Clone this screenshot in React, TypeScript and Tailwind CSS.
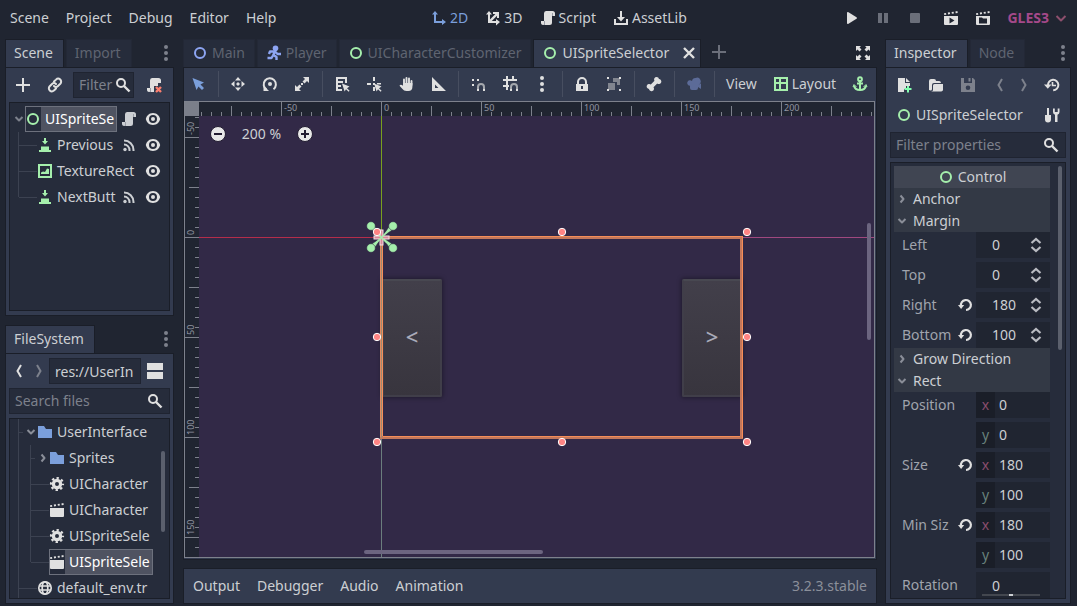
import type { ReactNode } from "react";

const CURSOR = "M8 7.5 15.5 10.6 13 12.2 15.6 14.8 14.6 15.8 12 13.2 10.6 15.4z";

const ICONS: Record<string, ReactNode> = {
  node: <circle cx="8" cy="8" r="5" fill="none" stroke="currentColor" strokeWidth="2" />,
  player: (
    <g fill="none" stroke="currentColor" strokeWidth="2.4" strokeLinejoin="round">
      <circle cx="9.5" cy="3.2" r="2.8" fill="currentColor" stroke="none" />
      <path d="M9 6.5 7 10.5M3 9l1-2.5L9 6.5l2.5 2.5H15M7.5 10l3 2v3M7 10.5 5.5 13H1.5" />
    </g>
  ),
  axes2d: (
    <path d="M4 1 1 4.5h2V13h8v2l4-3-4-3v2H5V4.5h2z" />
  ),
  axes3d: (
    <path d="M4 1 1 4.5h2V13h8v2.5l4-3.5-4-3v2H6.8L12 5.8V8h2V2H8v2h2.4L5 9.6V4.5h2z" />
  ),
  script: (
    <>
      <path d="M6 1a2.5 2.5 0 0 0-2 2.5V11H1v2.3A2 2 0 0 0 3 15h6.5a2.5 2.5 0 0 0 2.5-2.5V6h3V3.5A2.5 2.5 0 0 0 12.5 1z" />
      <path d="M4 11h1v4H3c1 0 1-1 1-2zM12 3h1v3h-1z" fill="#9a9da6" />
    </>
  ),
  scriptRemove: (
    <>
      <path d="M6 1a2.5 2.5 0 0 0-2 2.5V11H1v2.3A2 2 0 0 0 3 15h5V9h4V6h3V3.5A2.5 2.5 0 0 0 12.5 1z" />
      <path d="M4 11h1v4H3c1 0 1-1 1-2z" fill="#9a9da6" />
      <path d="m10 10 5 5m0-5-5 5" stroke="#fc7f6f" strokeWidth="2.4" />
    </>
  ),
  download: (
    <path d="M7 1v6H4l4 4.5L12 7H9V1zM1 9v6h14V9h-2v4H3V9z" />
  ),
  play: <path d="M4 3v10a1 1 0 0 0 1.5.8l8-5a1 1 0 0 0 0-1.6l-8-5A1 1 0 0 0 4 3z" />,
  pause: <path d="M3 3h4v10H3zM9 3h4v10H9z" />,
  stop: <rect x="3" y="3" width="10" height="10" rx="1" />,
  playScene: (
    <path fillRule="evenodd" d="M1 6h14v8a1 1 0 0 1-1 1H2a1 1 0 0 1-1-1zm5.5 1.5v6l5-3zM1 3.2l2-.3.3 1.8-2 .3zM4.8 2.6l2-.3.3 1.8-2 .3zM8.6 2l2-.3.3 1.8-2 .3zM12.4 1.4l2-.3.3 1.8-2 .3z" />
  ),
  playCustom: (
    <path fillRule="evenodd" d="M1 6h14v8a1 1 0 0 1-1 1H2a1 1 0 0 1-1-1zm3 1.5v6h8v-5H8l-1-1zM1 3.2l2-.3.3 1.8-2 .3zM4.8 2.6l2-.3.3 1.8-2 .3zM8.6 2l2-.3.3 1.8-2 .3zM12.4 1.4l2-.3.3 1.8-2 .3z" />
  ),
  scene: (
    <path d="M1 6h14v8a1 1 0 0 1-1 1H2a1 1 0 0 1-1-1zM1 3.2l2-.3.3 1.8-2 .3zM4.8 2.6l2-.3.3 1.8-2 .3zM8.6 2l2-.3.3 1.8-2 .3zM12.4 1.4l2-.3.3 1.8-2 .3z" />
  ),
  chevronDown: <path d="m4.500 6 3.500 3.500L11.500 6" fill="none" stroke="currentColor" strokeWidth="2" strokeLinejoin="round" />,
  chevronRight: <path d="m6.500 4.500 3 3.500-3 3.500" fill="none" stroke="currentColor" strokeWidth="2" strokeLinejoin="round" />,
  dropdown: <path d="m3.500 6 4.500 4.500L12.500 6" fill="none" stroke="currentColor" strokeWidth="2" strokeLinejoin="round" />,
  back: <path d="M10 2 6.500 8l3.500 6" fill="none" stroke="currentColor" strokeWidth="2" />,
  forward: <path d="m6 2 3.500 6L6 14" fill="none" stroke="currentColor" strokeWidth="2" />,
  dots: (
    <g>
      <circle cx="8" cy="2" r="2" />
      <circle cx="8" cy="8" r="2" />
      <circle cx="8" cy="14" r="2" />
    </g>
  ),
  plus: <path d="M7 1h2v6h6v2H9v6H7V9H1V7h6z" />,
  link: (
    <g fill="none" stroke="currentColor" strokeWidth="2" strokeLinecap="round">
      <path d="M7 4.500 9 2.600a2.900 2.900 0 0 1 4.300 4.200L11 9a2.900 2.900 0 0 1-4 0" />
      <path d="M9 11.500 7 13.400a2.900 2.900 0 0 1-4.300-4.200L5 7a2.900 2.900 0 0 1 4 0" />
    </g>
  ),
  search: (
    <g fill="none" stroke="currentColor" strokeWidth="2">
      <circle cx="6" cy="6" r="4" />
      <path d="m9 9 5.500 5.500" strokeWidth="2.400" />
    </g>
  ),
  button: <path d="M7 1v3H5l3 3.500L11 4H9V1zM4 9.500h8V13h2v2H2v-2h2z" />,
  texture: (
    <>
      <path fillRule="evenodd" d="M1 1h14v14H1zm2 2v10h10V3z" />
      <path d="M4 11V9.500L6 8.500l2 .5 2-3.500 2 .5V11z" />
    </>
  ),
  signal: (
    <g fill="none" stroke="currentColor" strokeWidth="2">
      <circle cx="4" cy="12.500" r="1.700" fill="currentColor" stroke="none" />
      <path d="M3 7.500A5.500 5.500 0 0 1 8.500 13v1M3 3.500A9.500 9.500 0 0 1 12.500 13v1" />
    </g>
  ),
  eye: (
    <>
      <path fillRule="evenodd" d="M8 2C4 2 1.500 5 .8 8 1.500 11 4 14 8 14s6.500-3 7.200-6C14.500 5 12 2 8 2zm0 2a4 4 0 0 1 0 8 4 4 0 0 1 0-8z" />
      <circle cx="8" cy="8" r="2" />
    </>
  ),
  split: <path d="M0 0h16v7H0zM0 9h16v7H0z" />,
  folder: <path d="M1 2h6l2 3h6v9H1z" />,
  gear: (
    <g fill="none" stroke="currentColor">
      <circle cx="8" cy="8" r="3.600" strokeWidth="3.200" />
      <circle cx="8" cy="8" r="6" strokeWidth="2.200" strokeDasharray="2.350 2.362" strokeDashoffset="1.170" />
    </g>
  ),
  globe: (
    <g fill="none" stroke="currentColor" strokeWidth="1.700">
      <circle cx="8" cy="8" r="6.200" />
      <ellipse cx="8" cy="8" rx="2.800" ry="6.200" />
      <path d="M2 6h12M2 10h12" strokeWidth="1.400" />
    </g>
  ),
  close: <path d="m3 3 10 10M13 3 3 13" stroke="currentColor" strokeWidth="2.400" />,
  expand: (
    <path d="M1 1h5L4.500 2.500l2 2-2 2-2-2L1 6zM15 1v5l-1.500-1.500-2 2-2-2 2-2L10 1zM1 15v-5l1.500 1.500 2-2 2 2-2 2L6 15zM15 15h-5l1.500-1.500-2-2 2-2 2 2L15 10z" />
  ),
  select: <path d="M1.500 2 13 6.500 9.500 8.500 13 12 11 14 7.500 10.500 5.500 14z" />,
  move: <path d="M8 1 5 4.500h6zM8 15l3-3.500H5zM1 8l3.500-3v6zM15 8l-3.500-3v6zM8 6l2 2-2 2-2-2z" />,
  rotate: (
    <>
      <path d="M4.500 13.500A6.100 6.100 0 1 1 11.500 13.200" fill="none" stroke="currentColor" strokeWidth="2" />
      <path d="M1.500 9.500V15H7z" />
      <circle cx="8" cy="8" r="2" />
    </>
  ),
  scale: (
    <path d="M9 1h6v6l-2-2-2.500 2.500-2-2L11 3zM1 9v6h6l-2-2 2.500-2.500-2-2L3 11zM7 7h2v2H7z" />
  ),
  listSelect: (
    <>
      <path d="M2 1h11v6h-2V3H4v2h5v2H4v2h3v2H4v2h4v2H2z" />
      <path d={CURSOR} />
    </>
  ),
  pivot: (
    <>
      <path d="M7 1h2v4H7zM1 7h4v2H1zM7 11h2v4H7zM11 7h4v1.500h-4zM7 7h2v2H7z" />
      <path d={CURSOR} />
    </>
  ),
  hand: (
    <>
      <path d="M6 9V3.500M8.500 8V2M11 8V2.500M13.500 9V5" fill="none" stroke="currentColor" strokeWidth="1.900" strokeLinecap="round" />
      <path d="M5 7h9.400v4c0 2.500-1.500 4-4 4H8.500c-2 0-3-.8-4-2L1.500 9.800C2 8.500 3.500 8.500 5 9.800z" />
    </>
  ),
  ruler: <path fillRule="evenodd" d="M2 1v14h14zm3 7.500 3.500 3.500H5z" />,
  smartSnap: (
    <>
      <path d="M2 3h2v2H2zM7 3h2v2H7zM2 8h2v2H2z" />
      <path d="M8 15v-4a3 3 0 0 1 6 0v4" fill="none" stroke="#a4a7ad" strokeWidth="2" />
      <path d="M7 13h2v2H7zM13 13h2v2h-2z" />
    </>
  ),
  gridSnap: (
    <>
      <path d="M4 0h2v3h4V0h2v3h3v2H6v4h1v2H6v3H4v-3H1V9h3V5H1V3h3z" />
      <path d="M9 15v-4a3 3 0 0 1 6 0v4" fill="none" stroke="#a4a7ad" strokeWidth="2" />
      <path d="M8 13h2v2H8zM14 13h2v2h-2z" />
    </>
  ),
  lock: (
    <path fillRule="evenodd" d="M8 1a5 5 0 0 0-5 5v2H2v7h12V8h-1V6a5 5 0 0 0-5-5zm0 2a3 3 0 0 1 3 3v2H5V6a3 3 0 0 1 3-3zM7 10h2v3H7z" />
  ),
  group: (
    <>
      <path d="M7 2h7v7h-3V6H7zM2 7h7v7H2z" fill="#81858f" />
      <path d="M1 1h2v2H1zM13 1h2v2h-2zM1 13h2v2H1zM13 13h2v2h-2z" />
    </>
  ),
  bone: (
    <path d="M10.500 1a2.500 2.500 0 0 0-2 3.800L4.800 8.500A2.500 2.500 0 1 0 3 12.900a2.500 2.500 0 1 0 4.500-1.700l3.700-3.700A2.500 2.500 0 1 0 13 3.100 2.500 2.500 0 0 0 10.500 1z" />
  ),
  camera: (
    <path d="M9.500 2A3.500 3.500 0 0 0 6 5a2.800 2.800 0 1 0-2 4.800V12a2 2 0 0 0 2 2h4a2 2 0 0 0 2-2v-1l3 2V7.500l-2.500 1.200A3.500 3.500 0 0 0 9.500 2z" />
  ),
  layout: (
    <path fillRule="evenodd" d="M1 1h14v14H1zm2 2v3h3V3zm5 0v3h5V3zM3 8v5h3V8zm5 0v5h5V8z" />
  ),
  anchor: (
    <g fill="none" stroke="currentColor" strokeWidth="2">
      <circle cx="8" cy="3.200" r="1.900" />
      <path d="M8 5v9M5 7.500h6M2 9.500C2.500 12.500 5 14 8 14s5.500-1.500 6-4.500" />
      <path d="M1 11l1-2.500L4.500 11M15 11l-1-2.500L11.500 11" strokeWidth="1" />
    </g>
  ),
  newFile: (
    <>
      <path d="M2 1v14h6v-3h2V9h4V6H9V1zM10 1v4h4z" />
      <path d="M11 9h2v2h2.500v2H13v2.500h-2V13H8.500v-2H11z" fill="#84ffb1" />
    </>
  ),
  open: (
    <path d="M1 13V4a2 2 0 0 1 2-2h3a2 2 0 0 1 2 2h3a2 2 0 0 1 2 2H6a2 2 0 0 0-2 2v4a1.500 1.500 0 0 1-1.500 1.500zM6.500 7H15v5a2 2 0 0 1-2 2.500H3c1.500 0 2-1 2-2V8.500A1.500 1.500 0 0 1 6.500 7z" />
  ),
  save: (
    <path fillRule="evenodd" d="M1 1h3v5h8V1h1l2 2v12H1zm7 7.500a2.300 2.300 0 1 0 0 4.600 2.300 2.300 0 0 0 0-4.600zM8.500 1h2v3.500h-2z" />
  ),
  history: (
    <>
      <path d="M4 8.500A5.200 5.200 0 1 1 9.200 13.200" fill="none" stroke="currentColor" strokeWidth="2" />
      <path d="M0 7.500h7.500l-3.700 4.300z" />
      <path d="M8.500 5v3.500H12" fill="none" stroke="currentColor" strokeWidth="1.600" />
    </>
  ),
  tools: (
    <path d="M3 1h2v7h2v4.500a3 3 0 0 1-6 0V8h2zM9 1.500V5a3 3 0 0 0 2 2.800V15h2.500V7.800A3 3 0 0 0 15.500 5V1.500h-1.800V5h-2.900V1.500z" />
  ),
  revert: (
    <>
      <path d="M4 9A5 5 0 1 1 9 13" fill="none" stroke="currentColor" strokeWidth="2.200" />
      <path d="M1 8h6.200l-3.100 4z" />
    </>
  ),
  updown: (
    <path d="M3.500 6 8 2l4.500 4M3.500 10 8 14l4.500-4" fill="none" stroke="currentColor" strokeWidth="2.200" />
  ),
};

function Icon({ name, className = "text-[#e0e0e0]" }: { name: string; className?: string }) {
  return (
    <svg viewBox="0 0 16 16" fill="currentColor" aria-hidden="true" className={`size-4 shrink-0 ${className}`}>
      {ICONS[name]}
    </svg>
  );
}

function Tool({ name, label, className = "w-8", color }: { name: string; label: string; className?: string; color?: string }) {
  return (
    <button type="button" aria-label={label} className={`flex h-8 shrink-0 items-center justify-center ${className}`}>
      <Icon name={name} className={color} />
    </button>
  );
}

function Separator() {
  return (
    <span className="flex w-2 shrink-0 justify-center">
      <span className="h-[26px] w-px bg-[#474e60]" />
    </span>
  );
}

const TAB_ACTIVE = "border-x border-t border-[#1a1e28] bg-[#333b4f] text-[#cccfd3]";
const TAB_IDLE = "border-x border-t border-[#232836] bg-[#262c3b] text-[#5f6471]";

function DockTab({ label, active }: { label: string; active?: boolean }) {
  return (
    <button type="button" role="tab" aria-selected={!!active} className={`h-7 pr-2.5 pb-0.5 pl-2 ${active ? TAB_ACTIVE : TAB_IDLE}`}>
      {label}
    </button>
  );
}

function DockTabs({ tabs }: { tabs: string[] }) {
  return (
    <div className="flex h-7 shrink-0 items-center">
      <div role="tablist" className="flex flex-1 gap-0.5">
        {tabs.map((t, i) => (
          <DockTab key={t} label={t} active={i === 0} />
        ))}
      </div>
      <button type="button" aria-label="Dock options" className="flex w-4 justify-center">
        <Icon name="dots" className="text-[#7d818c]" />
      </button>
    </div>
  );
}

const PANEL = "border border-[#1a1e28] bg-[#333b4f]";
const BOX = "border border-[#1a1e28] bg-[#262c3b]";
const GUIDE = "bg-[#3c4251]";

function Guide({ last, reach }: { last?: boolean; reach: string }) {
  return (
    <span className="flex h-full shrink-0 items-center">
      <span className={`w-px ${GUIDE} ${last ? "h-1/2 self-start" : "h-full"}`} />
      <span className={`h-px ${reach} ${GUIDE}`} />
    </span>
  );
}

function SceneChild({ icon, label, signal, last }: { icon: string; label: string; signal?: boolean; last?: boolean }) {
  return (
    <li className="flex h-[26px] items-center pr-2">
      <Guide last={last} reach="w-[18px]" />
      <Icon name={icon} className="mr-1 text-[#a5efac]" />
      <span className="flex-1">{label}</span>
      {signal && <Icon name="signal" className="mr-2" />}
      <button type="button" aria-label={`Toggle ${label}`}>
        <Icon name="eye" />
      </button>
    </li>
  );
}

function SceneDock() {
  return (
    <section className="flex min-h-0 flex-[277] flex-col">
      <DockTabs tabs={["Scene", "Import"]} />
      <div className={`flex min-h-0 flex-1 flex-col px-[3px] pb-1 ${PANEL}`}>
        <div className="flex h-[34px] shrink-0 items-center">
          <Tool name="plus" label="Add node" className="w-7" />
          <Tool name="link" label="Instance scene" className="w-9" />
          <label className="flex h-[26px] w-16 items-center border border-[#1f2431] bg-[#262c3b] pl-[5px]">
            <input aria-label="Filter nodes" placeholder="Filter" className="w-9 bg-transparent outline-none placeholder:text-[#7d818c]" />
            <Icon name="search" />
          </label>
          <Tool name="scriptRemove" label="Detach script" className="ml-1 w-8" />
        </div>
        <ul className={`flex-1 overflow-hidden py-[3px] pl-2 ${BOX}`}>
          <li className="flex h-[26px] items-center pr-2">
            <Icon name="chevronDown" className="-mr-0.5 -ml-[7px] text-[#7d818c]" />
            <span className="mr-1 flex h-[26px] flex-1 items-center border border-[#6d717d] bg-[#4f5361] text-white">
              <span className="flex h-full w-[15px] items-center bg-[#262c3b]">
                <Icon name="node" className="-ml-px text-[#a5efac]" />
              </span>
              <span className="ml-1">UISpriteSe</span>
            </span>
            <Icon name="script" className="mr-2" />
            <button type="button" aria-label="Toggle UISpriteSelector">
              <Icon name="eye" />
            </button>
          </li>
          <SceneChild icon="button" label="Previous" signal />
          <SceneChild icon="texture" label="TextureRect" />
          <SceneChild icon="button" label="NextButt" signal last />
        </ul>
      </div>
    </section>
  );
}

function FileRow({ icon, label, selected, last }: { icon: string; label: string; selected?: boolean; last?: boolean }) {
  return (
    <li className="flex h-[26px] items-center">
      <Guide reach="w-0" />
      <span className="w-[11px]" />
      <Guide reach="w-[18px]" last={last} />
      {selected ? (
        <span className="flex h-[26px] items-center border border-[#6d717d] bg-[#4f5361] pr-0.5 text-white">
          <span className="flex h-full w-[15px] items-center bg-[#262c3b]">
            <Icon name={icon} className="-ml-px text-[#e0e0e0]" />
          </span>
          <span className="ml-1">{label}</span>
        </span>
      ) : (
        <>
          <Icon name={icon} />
          <span className="ml-1">{label}</span>
        </>
      )}
    </li>
  );
}

function FileSystemDock() {
  return (
    <section className="flex min-h-0 flex-[279] flex-col">
      <DockTabs tabs={["FileSystem"]} />
      <div className={`flex min-h-0 flex-1 flex-col gap-1 px-[3px] pt-1 pb-1 ${PANEL}`}>
        <div className="flex h-[26px] shrink-0 items-center">
          <button type="button" aria-label="Back" className="w-5 pl-0.5">
            <Icon name="back" />
          </button>
          <button type="button" aria-label="Forward" className="w-5 pl-0.5">
            <Icon name="forward" className="text-[#7d818c]" />
          </button>
          <input aria-label="Path" defaultValue="res://UserIn" className="h-[26px] w-[92px] border border-[#1f2431] bg-[#262c3b] pl-[5px] outline-none" />
          <button type="button" aria-label="Split mode" className="ml-1.5">
            <Icon name="split" />
          </button>
        </div>
        <label className="flex h-[26px] shrink-0 items-center border border-[#1f2431] bg-[#262c3b] pr-1.5 pl-[5px]">
          <input aria-label="Search files" placeholder="Search files" className="w-0 flex-1 bg-transparent outline-none placeholder:text-[#7d818c]" />
          <Icon name="search" />
        </label>
        <div className={`flex min-h-0 flex-1 overflow-hidden pl-2 ${BOX}`}>
          <ul className="flex-1 whitespace-nowrap">
            <li className="flex h-[26px] items-center">
              <Guide reach="w-1" />
              <Icon name="chevronDown" className="-mr-0.5 text-[#8a8e98]" />
              <Icon name="folder" className="mr-1 text-[#7b9fdb]" />
              UserInterface
            </li>
            <li className="flex h-[26px] items-center">
              <Guide reach="w-0" />
              <span className="w-[11px]" />
              <Guide reach="w-1" />
              <Icon name="chevronRight" className="-mr-0.5 text-[#8a8e98]" />
              <Icon name="folder" className="mr-1 text-[#7b9fdb]" />
              Sprites
            </li>
            <FileRow icon="gear" label="UICharacter" />
            <FileRow icon="scene" label="UICharacter" />
            <FileRow icon="gear" label="UISpriteSele" />
            <FileRow icon="scene" label="UISpriteSele" selected last />
            <li className="flex h-[26px] items-center">
              <Guide reach="w-[18px]" />
              <Icon name="globe" className="mr-1 text-[#e0e0e0]" />
              default_env.tr
            </li>
          </ul>
          <span className="mt-8 mr-1 h-[81px] w-1 shrink-0 rounded-full bg-[#5b606d]" />
        </div>
      </div>
    </section>
  );
}

function SceneTab({ icon, color, label, active }: { icon: string; color: string; label: string; active?: boolean }) {
  return (
    <button
      type="button"
      role="tab"
      aria-selected={!!active}
      className={`flex h-7 items-center gap-1 pb-0.5 pl-2 ${active ? `pr-[3px] ${TAB_ACTIVE}` : `pr-[9px] ${TAB_IDLE}`}`}
    >
      <Icon name={icon} className={color} />
      {label}
      {active && <Icon name="close" className="ml-2 text-[#e0e0e0]" />}
    </button>
  );
}

const RULER = Array.from({ length: 92 }, (_, i) => i);
const RULER_SIZE = 14;
const ORIGIN_X = 182;
const ORIGIN_Y = 121;

function tickLength(offset: number) {
  if (offset % 100 === 0) return RULER_SIZE;
  return offset % 50 === 0 ? 10 : 4;
}

function HorizontalRuler() {
  return (
    <svg className="h-[14px] w-0 flex-1 overflow-hidden bg-[#202531]" aria-hidden="true">
      {RULER.map((i) => {
        const offset = (i - 18) * 10;
        return <rect key={i} x={ORIGIN_X + offset} y={RULER_SIZE - tickLength(offset)} width="1" height={tickLength(offset)} fill="#7d818c" />;
      })}
      {[-50, 0, 50, 100, 150, 200].map((v) => (
        <text key={v} x={ORIGIN_X + v * 2 + 3} y="9" fontSize="9" fill="#9194a0">
          {v}
        </text>
      ))}
    </svg>
  );
}

function VerticalRuler() {
  return (
    <svg className="h-full w-[14px] shrink-0 overflow-hidden bg-[#202531]" aria-hidden="true">
      {RULER.map((i) => {
        const offset = (i - 12) * 10;
        return <rect key={i} x={RULER_SIZE - tickLength(offset)} y={ORIGIN_Y + offset} width={tickLength(offset)} height="1" fill="#7d818c" />;
      })}
      {[-50, 0, 50, 100, 150].map((v) => (
        <text key={v} transform={`translate(9 ${ORIGIN_Y + v * 2 - 2}) rotate(-90)`} fontSize="9" fill="#9194a0">
          {v}
        </text>
      ))}
    </svg>
  );
}

const HANDLES = [
  [178, 116], [363, 116], [548, 116],
  [178, 221], [548, 221],
  [178, 326], [363, 326], [548, 326],
];

const PREVIEW_BUTTON =
  "absolute top-[163px] h-[118px] w-[60px] rounded-[2px] border-2 border-[#403e49] border-t-[#484851] bg-linear-to-b from-[#423f4a] to-[#38353e] pb-1 text-[22px] font-medium text-[#a9abb9] shadow-[0_0_4px_1px_rgba(0,0,0,0.35)]";

function ZoomButton({ label, path }: { label: string; path: string }) {
  return (
    <button type="button" aria-label={label}>
      <svg viewBox="0 0 16 16" className="size-4" aria-hidden="true">
        <circle cx="8" cy="8" r="7.500" fill="#e8e8e8" stroke="#221c31" />
        <path d={path} stroke="#221c31" strokeWidth="2" />
      </svg>
    </button>
  );
}

function Canvas() {
  return (
    <div className="relative min-w-0 flex-1 overflow-hidden bg-[#322947]">
      <button type="button" className={`left-[183px] ${PREVIEW_BUTTON}`}>&lt;</button>
      <button type="button" className={`left-[483px] ${PREVIEW_BUTTON}`}>&gt;</button>
      <svg className="absolute inset-0 size-full" aria-hidden="true">
        <rect x="182" y="0" width="1" height="121" fill="#78a01e" />
        <rect x="182" y="323" width="1" height="100%" fill="#6b7d7d" />
        <rect x="0" y="121" width="182" height="1" fill="#b52d4b" />
        <rect x="544" y="121" width="100%" height="1" fill="#a0487f" />
        <g>
          <rect x="182.500" y="121.500" width="360" height="200" fill="none" stroke="#c3775b" strokeWidth="3" />
          <path d="M181 120.500h363M184 320.500h357M183.500 123v197M543.500 121v201" stroke="#f58d58" />
          <path d="M181.500 122v199" stroke="#e08a60" />
          <path d="M182.500 123v199" stroke="#a08a70" />
        </g>
        <g fill="#a5efac" stroke="#2a2540" strokeWidth=".5">
          {[[-1, -1], [1, -1], [-1, 1], [1, 1]].map(([sx, sy]) => (
            <g key={`${sx}${sy}`} transform={`translate(183 121) scale(${sx} ${sy})`}>
              <path d="M0 0 7.500 11 11 7.500z" />
              <circle cx="11" cy="11" r="4.300" />
            </g>
          ))}
        </g>
        <path d="M182.500 113.500v16M174.500 121.500h16" stroke="#f4dfe6" strokeWidth="4" />
        <path d="M182.500 114.500v14M175.500 121.500h14" stroke="#d98a98" strokeWidth="2" />
        <path d="m177 116 11 11m0-11-11 11" stroke="#a5efac" strokeWidth="1.500" />
        {HANDLES.map(([x, y]) => (
          <circle key={`${x}-${y}`} cx={x} cy={y} r="3.700" fill="#ff8484" stroke="#fff" />
        ))}
      </svg>
      <div className="absolute top-[10px] left-[11px] flex h-4 items-center">
        <ZoomButton label="Zoom out" path="M4 8h8" />
        <span className="w-[71px] text-center">200 %</span>
        <ZoomButton label="Zoom in" path="M4 8h8M8 4v8" />
      </div>
      <span className="absolute top-[107px] right-[3px] h-[117px] w-1 rounded-full bg-[#6c6580]" />
      <span className="absolute bottom-[3px] left-[165px] h-1 w-[179px] rounded-full bg-[#6c6580]" />
    </div>
  );
}

function CenterArea() {
  return (
    <main className="flex min-w-0 flex-1 flex-col">
      <div className="flex h-7 shrink-0 items-center">
        <div role="tablist" className="flex flex-1 items-center gap-0.5">
          <SceneTab icon="node" color="text-[#8da5f3]" label="Main" />
          <SceneTab icon="player" color="text-[#8da5f3]" label="Player" />
          <SceneTab icon="node" color="text-[#a5efac]" label="UICharacterCustomizer" />
          <SceneTab icon="node" color="text-[#a5efac]" label="UISpriteSelector" active />
          <button type="button" aria-label="New scene" className="ml-2 pb-0.5">
            <Icon name="plus" className="text-[#6b6f7a]" />
          </button>
        </div>
        <button type="button" aria-label="Distraction free mode" className="mr-1.5">
          <Icon name="expand" />
        </button>
      </div>
      <div className={`flex min-h-0 flex-1 flex-col pr-px pb-px ${PANEL}`}>
        <div className="flex h-[33px] shrink-0 items-center pb-px">
          <Tool name="select" label="Select mode" className="w-[30px]" color="text-[#7b9fdb]" />
          <Separator />
          <Tool name="move" label="Move mode" />
          <Tool name="rotate" label="Rotate mode" />
          <Tool name="scale" label="Scale mode" />
          <Separator />
          <Tool name="listSelect" label="List select" />
          <Tool name="pivot" label="Change pivot" />
          <Tool name="hand" label="Pan mode" />
          <Tool name="ruler" label="Ruler mode" />
          <Separator />
          <Tool name="smartSnap" label="Smart snap" />
          <Tool name="gridSnap" label="Grid snap" />
          <Tool name="dots" label="Snapping options" />
          <Separator />
          <Tool name="lock" label="Lock" />
          <Tool name="group" label="Group" />
          <Separator />
          <Tool name="bone" label="Skeleton options" />
          <Separator />
          <Tool name="camera" label="Override camera" color="text-[#5c6b98]" />
          <Separator />
          <button type="button" className="px-2">View</button>
          <button type="button" className="flex items-center gap-[3px] px-2">
            <Icon name="layout" className="text-[#a5efac]" />
            Layout
          </button>
          <Tool name="anchor" label="Anchor mode" color="text-[#a5efac]" />
        </div>
        <div className="flex min-h-0 flex-1 flex-col border border-[#7d818c]">
          <div className="flex h-[14px] shrink-0">
            <span className="w-[14px] bg-[#7b7f8a]" />
            <HorizontalRuler />
          </div>
          <div className="flex min-h-0 flex-1">
            <VerticalRuler />
            <Canvas />
          </div>
        </div>
      </div>
      <footer className={`mt-2 flex h-9 shrink-0 items-center gap-[17px] px-[9px] ${PANEL}`}>
        <button type="button">Output</button>
        <button type="button">Debugger</button>
        <button type="button">Audio</button>
        <button type="button">Animation</button>
        <span className="flex-1 text-right text-[#8b8f9a]">3.2.3.stable</span>
      </footer>
    </main>
  );
}

function SectionHeader({ label, open }: { label: string; open?: boolean }) {
  return (
    <button type="button" aria-expanded={!!open} className="flex h-[22px] w-full shrink-0 items-center bg-[#333945] text-left">
      <Icon name={open ? "chevronDown" : "chevronRight"} className="mr-[3px] text-[#8a8e98]" />
      {label}
    </button>
  );
}

function PropertyLabel({ id, label, revert }: { id: string; label: string; revert?: boolean }) {
  return (
    <>
      <label htmlFor={id} className="flex-1 pl-2 text-[#a0a4ad]">{label}</label>
      {revert && (
        <button type="button" aria-label={`Revert ${label}`} className="mr-[3px]">
          <Icon name="revert" />
        </button>
      )}
    </>
  );
}

function SpinRow({ label, value, revert }: { label: string; value: string; revert?: boolean }) {
  const id = `margin-${label}`;
  return (
    <div className="flex h-[26px] shrink-0 items-center">
      <PropertyLabel id={id} label={label} revert={revert} />
      <div className="flex h-full w-[74px] items-center bg-[#202531] pr-1.5">
        <input id={id} defaultValue={value} className="w-0 flex-1 bg-transparent pl-4 outline-none" />
        <button type="button" aria-label={`Step ${label}`}>
          <Icon name="updown" className="text-[#b9bbc1]" />
        </button>
      </div>
    </div>
  );
}

function VectorRows({ label, x, y, revert }: { label: string; x: string; y: string; revert?: boolean }) {
  const id = `rect-${label}`;
  return (
    <>
      <div className="flex h-[26px] shrink-0 items-center">
        <PropertyLabel id={id} label={label} revert={revert} />
        <div className="flex h-full w-[74px] items-center bg-[#202531]">
          <span className="flex h-full w-[19px] items-center justify-center bg-[#1a1e28] text-[#8a4d6d]">x</span>
          <input id={id} defaultValue={x} className="w-0 flex-1 bg-transparent pl-1 outline-none" />
        </div>
      </div>
      <div className="flex h-[26px] shrink-0 items-center justify-end">
        <div className="flex h-full w-[74px] items-center bg-[#202531]">
          <span className="flex h-full w-[19px] items-center justify-center bg-[#1a1e28] text-[#68817b]">y</span>
          <input aria-label={`${label} y`} defaultValue={y} className="w-0 flex-1 bg-transparent pl-1 outline-none" />
        </div>
      </div>
    </>
  );
}

function InspectorDock() {
  return (
    <aside className="flex w-[186px] shrink-0 flex-col">
      <DockTabs tabs={["Inspector", "Node"]} />
      <div className={`flex min-h-0 flex-1 flex-col px-1 pb-1 ${PANEL}`}>
        <div className="flex h-[34px] shrink-0 items-center">
          <Tool name="newFile" label="New resource" className="w-7" />
          <Tool name="open" label="Open resource" className="w-9" />
          <Tool name="save" label="Save resource" className="w-7" color="text-[#7d818c]" />
          <Tool name="back" label="Previous object" className="ml-1 w-7" color="text-[#7d818c]" />
          <Tool name="forward" label="Next object" className="w-5" color="text-[#7d818c]" />
          <Tool name="history" label="History" className="ml-auto w-7" />
        </div>
        <div className="flex h-[30px] shrink-0 items-center pb-1">
          <Icon name="node" className="mr-1 ml-1.5 text-[#a5efac]" />
          <span className="flex-1">UISpriteSelector</span>
          <Tool name="tools" label="Object tools" className="w-7" />
        </div>
        <label className="mb-1 flex h-[26px] shrink-0 items-center border border-[#1f2431] bg-[#262c3b] pr-1.5 pl-[5px]">
          <input aria-label="Filter properties" placeholder="Filter properties" className="w-0 flex-1 bg-transparent outline-none placeholder:text-[#7d818c]" />
          <Icon name="search" />
        </label>
        <div className={`flex min-h-0 flex-1 overflow-hidden px-[3px] pt-[3px] ${BOX}`}>
          <div className="flex min-w-0 flex-1 flex-col">
            <h2 className="flex h-[22px] shrink-0 items-center justify-center gap-1 bg-[#404552]">
              <Icon name="node" className="text-[#a5efac]" />
              Control
            </h2>
            <SectionHeader label="Anchor" />
            <SectionHeader label="Margin" open />
            <div className="flex shrink-0 flex-col gap-1">
              <SpinRow label="Left" value="0" />
              <SpinRow label="Top" value="0" />
              <SpinRow label="Right" value="180" revert />
              <SpinRow label="Bottom" value="100" revert />
            </div>
            <SectionHeader label="Grow Direction" />
            <SectionHeader label="Rect" open />
            <div className="flex shrink-0 flex-col gap-1">
              <VectorRows label="Position" x="0" y="0" />
              <VectorRows label="Size" x="180" y="100" revert />
              <VectorRows label="Min Siz" x="180" y="100" revert />
              <div className="flex h-[26px] shrink-0 items-center">
                <PropertyLabel id="rotation" label="Rotation" />
                <div className="flex h-full w-[74px] flex-col bg-[#202531]">
                  <input id="rotation" defaultValue="0" className="h-[22px] w-full bg-transparent pt-1 pl-4 outline-none" />
                  <span className="mr-2.5 ml-1.5 flex h-0.5 justify-center bg-[#43474f]">
                    <span className="w-1 bg-[#cccfd3]" />
                  </span>
                </div>
              </div>
            </div>
          </div>
          <span className="ml-2 h-[184px] w-1 shrink-0 rounded-full bg-[#5b606d]" />
        </div>
      </div>
    </aside>
  );
}

function ModeButton({ icon, label, active }: { icon: string; label: string; active?: boolean }) {
  return (
    <button type="button" className={`flex items-center gap-[3px] ${active ? "text-[#7b9fdb]" : ""}`}>
      <Icon name={icon} className={active ? "text-[#7b9fdb]" : "text-[#e0e0e0]"} />
      {label}
    </button>
  );
}

export default function App() {
  return (
    <div className="flex h-screen flex-col overflow-hidden bg-[#202531] font-['Noto_Sans',sans-serif] text-[14px] leading-5 text-[#cccfd3]">
      <header className="flex h-[39px] shrink-0 items-center justify-between pr-2 pb-[3px] pl-2.5">
        <nav className="flex gap-[17px]">
          <button type="button">Scene</button>
          <button type="button">Project</button>
          <button type="button">Debug</button>
          <button type="button">Editor</button>
          <button type="button">Help</button>
        </nav>
        <div className="ml-1.5 flex gap-[17px]">
          <ModeButton icon="axes2d" label="2D" active />
          <ModeButton icon="axes3d" label="3D" />
          <ModeButton icon="script" label="Script" />
          <ModeButton icon="download" label="AssetLib" />
        </div>
        <div className="flex items-center">
          <Tool name="play" label="Play" />
          <Tool name="pause" label="Pause" color="text-[#6b6f7a]" />
          <Tool name="stop" label="Stop" color="text-[#6b6f7a]" />
          <Tool name="playScene" label="Play scene" className="ml-1 w-8" />
          <Tool name="playCustom" label="Play custom scene" />
          <button type="button" className="ml-2 flex items-center gap-1 font-bold text-[#a5498a]">
            GLES3
            <Icon name="dropdown" className="text-[#8d4f6d]" />
          </button>
        </div>
      </header>
      <div className="flex min-h-0 flex-1 pr-1.5 pb-0.5 pl-[5px]">
        <div className="mr-[9px] flex w-[169px] shrink-0 flex-col gap-[9px]">
          <SceneDock />
          <FileSystemDock />
        </div>
        <CenterArea />
        <div className="w-2 shrink-0" />
        <InspectorDock />
      </div>
    </div>
  );
}
